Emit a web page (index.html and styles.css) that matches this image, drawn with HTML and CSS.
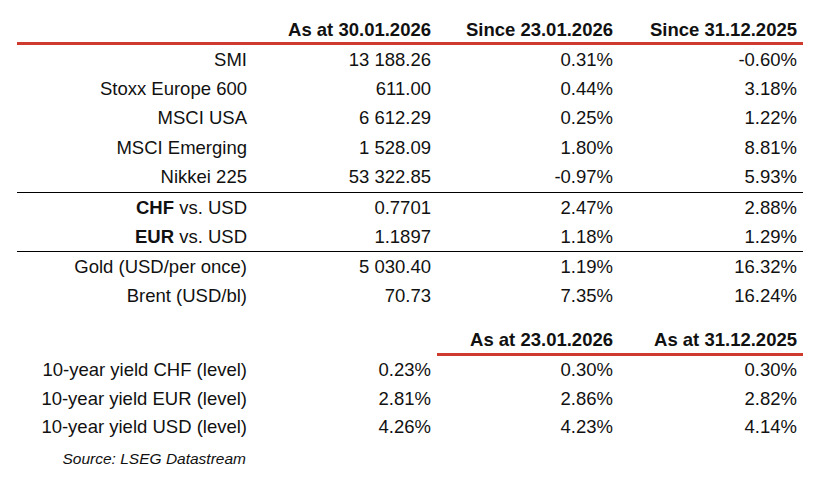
FILE: index.html
```html
<!DOCTYPE html>
<html lang="en">
<head>
<meta charset="utf-8">
<title>Market overview</title>
<link rel="stylesheet" href="styles.css">
</head>
<body>
<div class="market">
  <div class="row head">
    <span></span>
    <span>As at 30.01.2026</span>
    <span>Since 23.01.2026</span>
    <span>Since 31.12.2025</span>
  </div>

  <div class="group g-index">
    <div class="row"><span>SMI</span><span>13 188.26</span><span>0.31%</span><span>-0.60%</span></div>
    <div class="row"><span>Stoxx Europe 600</span><span>611.00</span><span>0.44%</span><span>3.18%</span></div>
    <div class="row"><span>MSCI USA</span><span>6 612.29</span><span>0.25%</span><span>1.22%</span></div>
    <div class="row"><span>MSCI Emerging</span><span>1 528.09</span><span>1.80%</span><span>8.81%</span></div>
    <div class="row"><span>Nikkei 225</span><span>53 322.85</span><span>-0.97%</span><span>5.93%</span></div>
  </div>

  <div class="group g-fx">
    <div class="row"><span><b>CHF</b> vs. USD</span><span>0.7701</span><span>2.47%</span><span>2.88%</span></div>
    <div class="row"><span><b>EUR</b> vs. USD</span><span>1.1897</span><span>1.18%</span><span>1.29%</span></div>
  </div>

  <div class="group g-comm">
    <div class="row"><span>Gold (USD/per once)</span><span>5 030.40</span><span>1.19%</span><span>16.32%</span></div>
    <div class="row"><span>Brent (USD/bl)</span><span>70.73</span><span>7.35%</span><span>16.24%</span></div>
  </div>

  <div class="row head2">
    <span></span>
    <span></span>
    <span class="red">As at 23.01.2026</span>
    <span class="red">As at 31.12.2025</span>
  </div>

  <div class="group g-yield">
    <div class="row"><span>10-year yield CHF (level)</span><span>0.23%</span><span>0.30%</span><span>0.30%</span></div>
    <div class="row"><span>10-year yield EUR (level)</span><span>2.81%</span><span>2.86%</span><span>2.82%</span></div>
    <div class="row"><span>10-year yield USD (level)</span><span>4.26%</span><span>4.23%</span><span>4.14%</span></div>
  </div>

  <div class="row source"><span>Source: LSEG Datastream</span></div>
</div>
</body>
</html>
```

FILE: styles.css
```css
html, body {
  margin: 0;
  padding: 0;
  background: #ffffff;
}

body {
  padding: 0 0 0 17px;
  font-family: "Liberation Sans", Arial, sans-serif;
  font-size: 18.5px;
  line-height: 22px;
  color: #111111;
}

.market {
  width: 786px;
}

.row {
  display: grid;
  grid-template-columns: 236px 184px 182px 184px;
  align-items: center;
}

.row > span {
  text-align: right;
  padding-right: 6px;
  white-space: nowrap;
}

/* header rows */
.head {
  height: 42px;
  align-items: end;
  border-bottom: 3px solid #cf3a2f;
  font-weight: bold;
}

.head > span {
  padding-bottom: 1px;
}

.head2 {
  height: 45px;
  align-items: end;
  font-weight: bold;
}

.head2 > span {
  align-self: stretch;
  display: flex;
  align-items: flex-end;
  justify-content: flex-end;
  padding-bottom: 2px;
  border-bottom: 3px solid transparent;
}

.head2 > span.red {
  border-bottom-color: #cf3a2f;
}

/* groups */
.g-index .row {
  height: 29.4px;
}

.g-index {
  border-bottom: 1px solid #000000;
}

.g-fx {
  padding-top: 1px;
  border-bottom: 1px solid #000000;
}

.g-fx .row {
  height: 28.5px;
}

.g-comm {
  padding-top: 1px;
}

.g-comm .row {
  height: 29px;
}

.g-yield .row {
  height: 28.5px;
}

.source {
  padding-top: 9px;
  font-style: italic;
  font-size: 15.5px;
  line-height: 18px;
}

.source > span {
  padding-right: 7px;
}
```
